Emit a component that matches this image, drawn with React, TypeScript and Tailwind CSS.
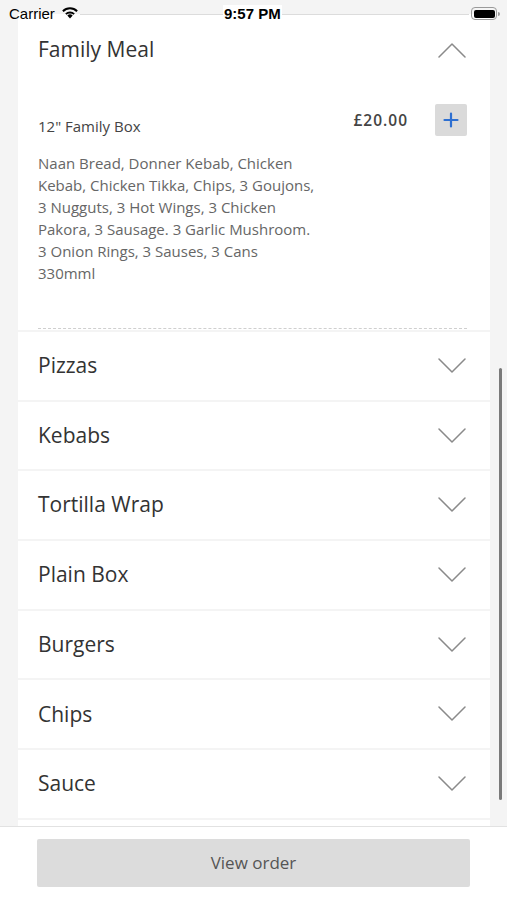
import React from "react";

const Chevron = ({ up = false }: { up?: boolean }) => (
  <svg width="28" height="16" viewBox="0 0 28 16" fill="none" className="block">
    {up ? (
      <path d="M1 15 L14 2 L27 15" stroke="#8a8a8a" strokeWidth="1.5" strokeLinecap="round" strokeLinejoin="round" />
    ) : (
      <path d="M1 1 L14 14 L27 1" stroke="#8a8a8a" strokeWidth="1.5" strokeLinecap="round" strokeLinejoin="round" />
    )}
  </svg>
);

const categories = ["Pizzas", "Kebabs", "Tortilla Wrap", "Plain Box", "Burgers", "Chips", "Sauce"];

const desc = [
  "Naan Bread, Donner Kebab, Chicken",
  "Kebab, Chicken Tikka, Chips, 3 Goujons,",
  "3 Nugguts, 3 Hot Wings, 3 Chicken",
  "Pakora, 3 Sausage. 3 Garlic Mushroom.",
  "3 Onion Rings, 3 Sauses, 3 Cans",
  "330mml",
];

export default function App() {
  const font = { fontFamily: '"Open Sans", "Noto Sans", sans-serif' };
  return (
    <div className="relative flex h-[900px] w-[507px] flex-col overflow-hidden bg-[#f4f4f4]" style={font}>
      {/* status bar overlay */}
      <div className="absolute left-0 right-0 top-0 z-20 h-[28px]" style={{ fontFamily: '"Liberation Sans", Arial, sans-serif' }}>
        <div className="absolute left-[80px] right-[38px] top-[14px] h-px bg-[#dcdcdc]" />
        <div className="absolute left-[9px] top-[5px] text-[15px] leading-[18px] text-black">Carrier</div>
        <svg className="absolute left-[61px] top-[6px]" width="18" height="13" viewBox="0 0 18 13">
          <path d="M9 12.5 L6.3 9.6 A3.9 3.9 0 0 1 11.7 9.6 Z" fill="#000" />
          <path d="M4.2 7.5 A6.9 6.9 0 0 1 13.8 7.5 L12.5 8.8 A5.1 5.1 0 0 0 5.5 8.8 Z" fill="#000" />
          <path d="M1.2 4.6 A11 11 0 0 1 16.8 4.6 L15.4 6 A9 9 0 0 0 2.6 6 Z" fill="#000" />
        </svg>
        <div className="absolute left-[223px] top-[5px] bg-white px-[1px] text-[15px] font-bold leading-[18px] text-black">9:57 PM</div>
        <div className="absolute left-[471px] top-[7px] flex items-center">
          <div className="flex h-[13px] w-[26px] items-center rounded-[4px] border border-[#9a9a9a] p-[1.5px]">
            <div className="h-full w-full rounded-[2px] bg-black" />
          </div>
          <div className="ml-[1px] h-[4px] w-[1.5px] rounded-r-sm bg-[#9a9a9a]" />
        </div>
      </div>

      {/* scroll area */}
      <div className="relative flex-1 overflow-hidden">
        <div className="flex flex-col gap-[2px] px-[18px] pr-[17px] pt-[14px]">
          {/* expanded section */}
          <div className="bg-white">
            <div className="flex h-[72px] items-center justify-between pl-[20px] pr-[24px]">
              <span className="text-[21px] text-[#333]">Family Meal</span>
              <Chevron up />
            </div>
            <div className="px-[20px] pr-[23px] pt-[18px]">
              <div className="flex items-start justify-between">
                <span className="mt-[12px] text-[15px] leading-[20px] text-[#444]">12" Family Box</span>
                <div className="flex items-start gap-[27px]">
                  <span className="mt-[6px] text-[15.5px] font-semibold leading-[20px] tracking-[1px] text-[#444]">£20.00</span>
                  <button className="flex h-[32px] w-[32px] items-center justify-center rounded-[2px] bg-[#dadada]">
                    <svg width="16" height="16" viewBox="0 0 16 16">
                      <path d="M8 1.5 V14.5 M1.5 8 H14.5" stroke="#2d6fd1" strokeWidth="2.2" strokeLinecap="round" />
                    </svg>
                  </button>
                </div>
              </div>
              <div className="mt-[16px] text-[15px] leading-[22px] text-[#666]">
                {desc.map((l) => (
                  <div key={l} className="whitespace-nowrap">{l}</div>
                ))}
              </div>
              <div className="mt-[44px] border-b border-dashed border-[#cfcfcf]" />
            </div>
            <div className="h-[1px]" />
          </div>

          {categories.map((c) => (
            <div key={c} className="flex h-[67.7px] items-center justify-between bg-white pl-[20px] pr-[24px]">
              <span className="text-[21px] text-[#333]">{c}</span>
              <Chevron />
            </div>
          ))}
          <div className="h-[68px] bg-white" />
        </div>

        {/* scrollbar */}
        <div className="absolute left-[499px] top-[368px] h-[432px] w-[3px] rounded-full bg-[#7a7a7a]" />
      </div>

      {/* footer */}
      <div className="z-10 flex h-[74px] shrink-0 items-start justify-center border-t border-[#e2e2e2] bg-white pt-[12px]">
        <button className="flex h-[48px] w-[433px] items-center justify-center rounded-[2px] bg-[#dcdcdc] text-[17px] text-[#555]">
          View order
        </button>
      </div>
    </div>
  );
}
